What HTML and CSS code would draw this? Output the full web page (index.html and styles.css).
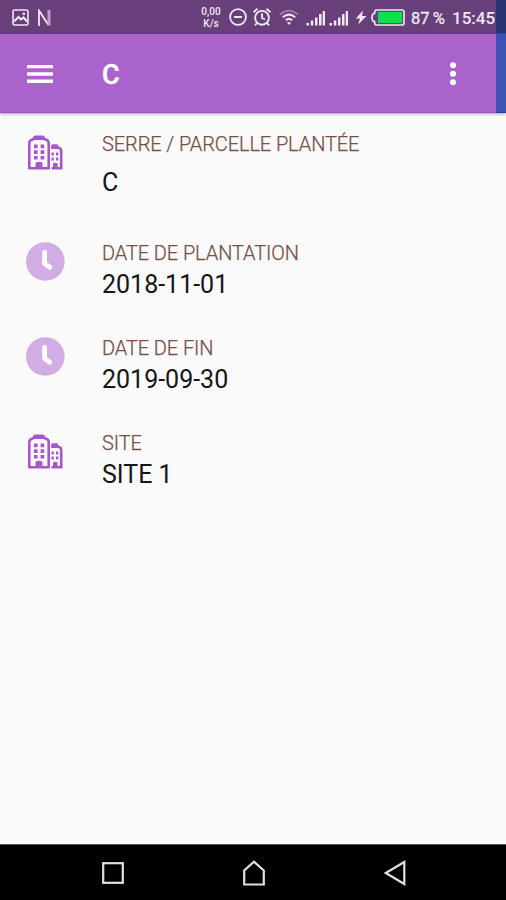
FILE: index.html
```
<!DOCTYPE html>
<html lang="fr">
<head>
<meta charset="utf-8">
<title>C</title>
<link rel="stylesheet" href="styles.css">
</head>
<body>
<svg class="defs" width="0" height="0" aria-hidden="true">
  <symbol id="building" viewBox="0 0 35 35">
    <path d="M1.300 33.200V8Q1.300 4.900 5 4.500L7 1.800H15L17 4.500Q20.700 4.900 20.700 8V33.200Z" fill="#fdf9ff" stroke="currentColor" stroke-width="2.600" stroke-linejoin="round"/>
    <path d="M5 5 7 1H15L17 5Z" fill="currentColor"/>
    <path d="M23.200 12.800H30Q33.200 13 33.200 16V33.200H23.600" fill="none" stroke="currentColor" stroke-width="2.600"/>
    <path d="M23.200 10.500 24.500 9.300H29.500L31 12.600H23.200Z" fill="currentColor"/>
    <path d="M6 9.500h3.600v3.700H6zM12.600 9.500h3.600v3.700h-3.600zM6 15.200h3.600v3.700H6zM12.600 15.200h3.600v3.700h-3.600zM6 20.900h3.600v3.500H6zM12.600 20.900h3.600v3.500h-3.600zM7.500 34v-5.500q0-1.700 3.500-1.700t3.500 1.700V34zM23.500 17.500h2.300v3h-2.300zM28 17.500h2.300v3h-2.300zM23.500 22.500h2.300v3h-2.300zM28 22.500h2.300v3h-2.300zM25 34v-4.800q0-1.400 2.300-1.400t2.300 1.400v4.800z" fill="currentColor"/>
  </symbol>
  <symbol id="clock" viewBox="0 0 40 40">
    <circle cx="20.300" cy="20.500" r="19.300" fill="#d1ade3"/>
    <path d="M19.600 11.300V22.500L24.800 26.300" fill="none" stroke="#fff" stroke-width="4.800" stroke-linecap="round" stroke-linejoin="round"/>
  </symbol>
  <symbol id="signal" viewBox="0 0 20 16">
    <path d="M.5 13h2.500v2.500H.5zM4.800 10.500h2.500v5H4.800zM9 7.500h2.500v8H9zM13 4h2.500v11.500H13zM16.700 1h2.300v14.500h-2.300z" fill="currentColor"/>
  </symbol>
</svg>
<div class="screen">
  <header class="top">
    <div class="status">
      <svg class="st-image" width="17" height="17" viewBox="0 0 17 17" fill="none" stroke="currentColor" stroke-width="1.600"><rect x="1" y="1" width="15" height="15" rx="1.500"/><path d="M2 12.500 6.500 8 9 10.500 11.500 8.500 15 12.500" stroke-width="2"/><circle cx="11.800" cy="4.800" r=".6"/></svg>
      <svg class="st-n" width="15" height="18" viewBox="0 0 15 18" fill="none" stroke="currentColor" stroke-width="1.800"><path d="M2 17V1.500L11.500 16"/><path d="M12 1V16.500" stroke="#b7a3c6" stroke-width="3"/></svg>
      <div class="st-speed"><span>0,00</span><span>K/s</span></div>
      <svg class="st-dnd" width="18" height="18" viewBox="0 0 18 18" fill="none" stroke="currentColor" stroke-width="1.800"><circle cx="9" cy="9" r="7.900"/><path d="M5 9H13" stroke-width="2"/></svg>
      <svg class="st-alarm" width="20" height="20" viewBox="0 0 20 20" fill="none" stroke="currentColor" stroke-width="1.900"><circle cx="10" cy="10.800" r="6.900"/><path d="M10 6.500V11L13 12.500M1.500 5.200 5.500 1.800M14.500 1.800 18.500 5.200M5 16 3 18.300M15 16 17 18.300"/></svg>
      <svg class="st-wifi" width="20" height="17" viewBox="0 0 20 17" fill="none" stroke="currentColor" stroke-width="2"><path d="M1 5.500Q10-2 19 5.500" opacity=".35"/><path d="M3.800 8.300Q10 2.900 16.200 8.300M6.700 11.300Q10 8.500 13.300 11.300"/><path d="M7.800 13.300H12.200L10 16Z" fill="currentColor" stroke="none"/></svg>
      <svg class="st-sig1" width="20" height="16"><use href="#signal"/></svg>
      <svg class="st-sig2" width="20" height="16"><use href="#signal"/></svg>
      <svg class="st-bolt" width="12" height="15" viewBox="0 0 12 15"><path d="M8 .5.800 8.500H5L3.200 14.500 11.500 6H7Z" fill="currentColor"/></svg>
      <svg class="st-batt" width="34" height="17" viewBox="0 0 34 17"><path d="M5.500 1H31Q33 1 33 3V14Q33 16 31 16H5.500Q3.500 16 3.500 12.500 1 12.500 1 8.500T3.500 4.500Q3.500 1 5.500 1Z" fill="#68407c" stroke="#eee5f1" stroke-width="1.700"/><rect x="7" y="3" width="24" height="11" fill="#12df4d"/></svg>
      <span class="st-percent">87 %</span>
      <span class="st-time">15:45</span>
    </div>
    <div class="bar">
      <svg class="menu" width="26" height="20" viewBox="0 0 26 20"><path d="M0 2.600H26M0 10H26M0 17.300H26" stroke="#fff" stroke-width="3.400"/></svg>
      <h1>C</h1>
      <svg class="more" width="8" height="24" viewBox="0 0 8 24" fill="#fff"><circle cx="4" cy="3.200" r="3"/><circle cx="4" cy="11.800" r="3"/><circle cx="4" cy="20.200" r="3"/></svg>
    </div>
    <div class="edge"></div>
  </header>
  <main class="list">
    <section class="row first">
      <svg class="icon building" width="35" height="35"><use href="#building"/></svg>
      <div class="text"><div class="label">SERRE / PARCELLE PLANTÉE</div><div class="value">C</div></div>
    </section>
    <section class="row">
      <svg class="icon clock" width="40" height="40"><use href="#clock"/></svg>
      <div class="text"><div class="label">DATE DE PLANTATION</div><div class="value">2018-11-01</div></div>
    </section>
    <section class="row">
      <svg class="icon clock" width="40" height="40"><use href="#clock"/></svg>
      <div class="text"><div class="label">DATE DE FIN</div><div class="value">2019-09-30</div></div>
    </section>
    <section class="row">
      <svg class="icon building" width="35" height="35"><use href="#building"/></svg>
      <div class="text"><div class="label">SITE</div><div class="value">SITE 1</div></div>
    </section>
  </main>
  <nav class="nav">
    <svg width="22" height="22" viewBox="0 0 22 22"><rect x="1.200" y="1.200" width="19.600" height="19.600"/></svg>
    <svg width="22" height="26" viewBox="0 0 22 26"><path d="M1.200 24.500V10.500L11 1.800 20.800 10.500V24.500Z"/></svg>
    <svg width="22" height="26" viewBox="0 0 22 26"><path d="M20.300 2V24L1.800 13Z"/></svg>
  </nav>
</div>
</body>
</html>
```

FILE: styles.css
```
* { box-sizing: border-box; }
body { margin: 0; font-family: Roboto, "Liberation Sans", sans-serif; }
.defs { position: absolute; }
svg { display: block; flex: none; }
.screen { width: 506px; height: 900px; display: flex; flex-direction: column; background: #fafafa; overflow: hidden; }
.top { height: 113px; display: grid; grid-template: 34px 79px / 496px 10px; box-shadow: 0 1px 3px rgba(0, 0, 0, .35); }
.status { grid-column: 1 / 3; display: flex; align-items: center; color: #f0e8f4; background: linear-gradient(to right, #683f7b 496px, #263773 496px); border-bottom: 1px solid #60366f; white-space: nowrap; }
.st-image { margin: 1px 0 0 12px; }
.st-n { margin: 2px 0 0 8px; }
.st-speed { width: 24px; margin-left: 147px; display: flex; flex-direction: column; align-items: center; font-size: 10px; line-height: 12px; font-weight: 500; padding-top: 2px; }
.st-dnd { margin: 1px 0 0 6px; }
.st-alarm { margin: 1px 0 0 5px; }
.st-wifi { margin: 2px 0 0 7px; }
.st-sig1 { margin: 3px 0 0 7px; }
.st-sig2 { margin: 3px 0 0 3px; }
.st-bolt { margin: 1px 0 0 6px; }
.st-batt { margin: 1px 0 0 4px; }
.st-percent { width: 36px; margin-left: 6px; font-size: 16.500px; word-spacing: -1px; padding-top: 3px; -webkit-text-stroke: .3px #f0e8f4; }
.st-time { margin-left: 5px; font-size: 17px; font-weight: 500; padding-top: 2px; }
.bar { display: flex; align-items: center; background: #aa63cc; border-bottom: 1px solid #9d5abd; color: #fff; }
.menu { margin: 2px 0 0 27px; }
h1 { margin: 4px 0 0 49px; font-size: 27px; line-height: 34px; font-weight: 500; -webkit-text-stroke: .4px #fff; }
.more { margin: 1px 39px 0 auto; }
.edge { background: #3f51b5; border-bottom: 1px solid #263c99; }
.list { flex: 1; padding-top: 19px; }
.row { display: flex; height: 95px; }
.first { height: 109px; }
.building { margin: 3px 39px 0 28px; color: #a558c7; }
.clock { margin: 0 37px 0 25px; }
.label { font-size: 20px; line-height: 24px; letter-spacing: -.1px; color: #764f45; font-weight: 300; -webkit-text-stroke: .25px #764f45; white-space: nowrap; }
.value { font-size: 25px; line-height: 39px; color: #161616; }
.first .value { margin-top: 7px; }
.nav { height: 56px; display: flex; align-items: center; padding-left: 102px; gap: 119px; background: #000; border-top: 1px solid #555; fill: none; stroke: #e0e0e0; stroke-width: 2.200; }
```
